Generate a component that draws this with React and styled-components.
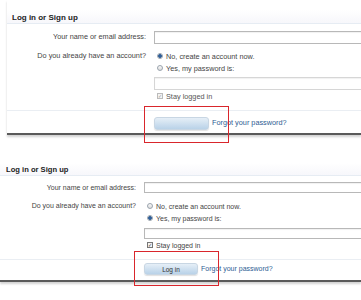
import styled, { createGlobalStyle } from "styled-components"

const Global = createGlobalStyle`
body{
    margin: 0;
    background: #fff;
    overflow: hidden;
    font-family: "Liberation Sans", Arial, sans-serif;
}
`

export default function App(){
    return(<>
    <Global />
    <Page>
        <LoginPanel chosen="no" />
        <LoginPanel compact chosen="yes" />
    </Page></>)
}

function LoginPanel({ compact, chosen }){
    return(
    <Panel compact={compact}>
        <Heading compact={compact}>Log in or Sign up</Heading>
        <Form compact={compact}>
            <Label compact={compact}>Your name or email address:</Label>
            <Control><Input compact={compact} /></Control>
            <Label compact={compact} account>Do you already have an account?</Label>
            <Control>
                <Choice compact={compact}><Radio on={chosen === "no"} />No, create an account now.</Choice>
                <Choice compact={compact}><Radio on={chosen === "yes"} />Yes, my password is:</Choice>
                <Input compact={compact} password faded={!compact} />
                <Choice compact={compact} faded={!compact}><Check faded={!compact}>✓</Check>Stay logged in</Choice>
            </Control>
        </Form>
        <Footer compact={compact}>
            <Submit compact={compact}>
                <Button compact={compact}>{compact ? "Log in" : ""}</Button>
                <Marker compact={compact} />
            </Submit>
            <Forgot compact={compact}>Forgot your password?</Forgot>
        </Footer>
    </Panel>)
}

export const Page = styled.div`
display: flex;
flex-direction: column;
width: 100%;
overflow: hidden;
padding-bottom: 8px;
`

export const Panel = styled.div`
margin-left: ${props => (props.compact ? "0" : "7px")};
margin-top: ${props => (props.compact ? "15px" : "0")};
border-bottom: 2px solid #5a5a5a;
box-shadow: 0 2px 2px rgba(0,0,0,0.18);
color: #333;
`

export const Heading = styled.div`
margin-top: ${props => (props.compact ? "13px" : "10px")};
height: ${props => (props.compact ? "11px" : "11px")};
padding-top: ${props => (props.compact ? "1px" : "2px")};
padding-left: ${props => (props.compact ? "6px" : "5px")};
font-size: ${props => (props.compact ? "7.6px" : "8px")};
font-weight: bold;
color: #222;
line-height: 11px;
border-bottom: 1px solid #e6ecf3;
background: linear-gradient(#fff, #f7f7fb);
`

export const Form = styled.div`
display: grid;
grid-template-columns: ${props => (props.compact ? "136px" : "139px")} 1fr;
column-gap: 8px;
padding-top: ${props => (props.compact ? "6px" : "7px")};
padding-bottom: 8px;
border-bottom: 1px solid #eaeef3;
`

export const Label = styled.div`
text-align: right;
font-size: ${props => (props.compact ? "7px" : "7.3px")};
line-height: ${props => (props.compact ? "11px" : "12px")};
margin-top: ${props => (props.account ? (props.compact ? "7px" : "6px") : "0")};
color: #444;
white-space: nowrap;
`

export const Control = styled.div`
display: flex;
flex-direction: column;
`

export const Input = styled.div`
height: ${props => (props.compact ? "9px" : "11px")};
border: 1px solid ${props => (props.faded ? "#d6d6d6" : "#b8b8b8")};
border-right: none;
background: #fff;
margin-top: ${props => (props.password ? (props.compact ? "4px" : "3px") : "0")};
box-shadow: inset 0 1px 1px rgba(0,0,0,0.06);
`

export const Choice = styled.div`
display: flex;
align-items: center;
gap: 3px;
height: 12px;
font-size: ${props => (props.compact ? "7px" : "7.3px")};
color: ${props => (props.faded ? "#555" : "#444")};
white-space: nowrap;
&:first-child{
    margin-top: ${props => (props.compact ? "7px" : "6px")};
}
`

export const Radio = styled.span`
box-sizing: border-box;
width: 6px;
height: 6px;
margin-left: 3px;
border-radius: 50%;
border: 1px solid #9aa3ad;
background: ${props => (props.on ? "radial-gradient(circle, #2f5f9a 0 1.6px, #cfd8e2 2px)" : "linear-gradient(#fafafa, #dcdcdc)")};
`

export const Check = styled.span`
box-sizing: border-box;
width: 6px;
height: 6px;
margin-left: 3px;
border: 1px solid ${props => (props.faded ? "#bbb" : "#777")};
background: #f4f4f4;
font-size: 5px;
line-height: 4px;
text-align: center;
color: ${props => (props.faded ? "#999" : "#333")};
`

export const Footer = styled.div`
display: flex;
align-items: center;
gap: 3px;
padding-left: ${props => (props.compact ? "144px" : "147px")};
padding-top: ${props => (props.compact ? "3px" : "6px")};
padding-bottom: ${props => (props.compact ? "5px" : "3px")};
`

export const Submit = styled.div`
position: relative;
`

export const Button = styled.div`
width: ${props => (props.compact ? "54px" : "55px")};
height: ${props => (props.compact ? "12px" : "13px")};
border-radius: 3px;
border: 1px solid #c8d6e3;
box-sizing: border-box;
background: linear-gradient(#e6eff7, #b9d2e8);
box-shadow: 0 1px 1px rgba(0,0,0,0.12);
font-size: 6.5px;
line-height: 11px;
text-align: center;
color: #333;
`

export const Marker = styled.div`
position: absolute;
left: -10px;
top: ${props => (props.compact ? "-12px" : "-11px")};
width: 85px;
height: ${props => (props.compact ? "35px" : "37px")};
border: 1.5px solid #d9262c;
box-sizing: border-box;
`

export const Forgot = styled.div`
font-size: ${props => (props.compact ? "7px" : "7.3px")};
color: #2d5c93;
white-space: nowrap;
margin-top: -2px;
`
